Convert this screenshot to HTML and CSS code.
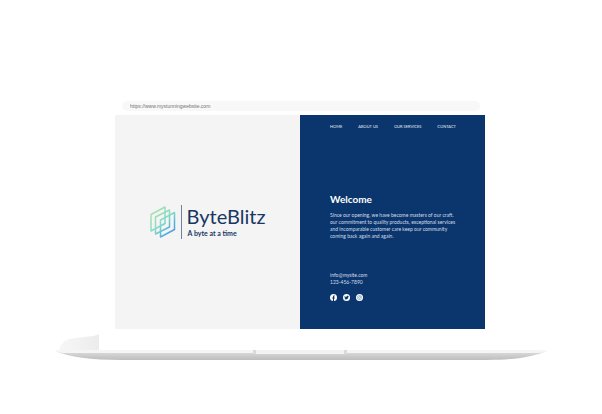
FILE: index.html
```html
<!DOCTYPE html>
<html lang="en">
<head>
<meta charset="utf-8">
<meta name="viewport" content="width=device-width, initial-scale=1">
<title>ByteBlitz</title>
<link rel="stylesheet" href="styles.css">
</head>
<body>
<main class="laptop">
  <div class="lid">
    <div class="browser">
      <div class="address-bar"><input class="address" type="text" aria-label="Address" value="https://www.mystunningwebsite.com" readonly></div>
      <div class="site">
        <section class="brand-panel">
          <svg class="mark" viewBox="0 0 26 32" aria-hidden="true">
            <defs>
              <linearGradient id="mint" gradientUnits="userSpaceOnUse" x1="1" y1="4" x2="25" y2="27">
                <stop offset="0" stop-color="#b1e2aa"/>
                <stop offset=".5" stop-color="#86dcc4"/>
                <stop offset=".75" stop-color="#58b6dd"/>
                <stop offset="1" stop-color="#4b92e5"/>
              </linearGradient>
            </defs>
            <g fill="none" stroke="url(#mint)" stroke-width="1.5" stroke-linejoin="round">
              <path d="M1 8.500 15 1V17.500L1 25Z"/>
              <path d="M5.500 11 19.500 4V21L5.500 28Z"/>
              <path d="M10.500 14 24.500 6.500V23.500L10.500 31Z"/>
            </g>
          </svg>
          <div class="wordmark">
            <h1 class="name">ByteBlitz</h1>
            <p class="tagline">A byte at a time</p>
          </div>
        </section>
        <section class="info-panel">
          <nav class="nav">
            <a href="#home">HOME</a>
            <a href="#about">ABOUT US</a>
            <a href="#services">OUR SERVICES</a>
            <a href="#contact">CONTACT</a>
          </nav>
          <div class="welcome">
            <h2 class="title">Welcome</h2>
            <p class="copy">Since our opening, we have become masters of our craft.<br>our commitment to quality products, exceptional services<br>and incomparable customer care keep our community<br>coming back again and again.</p>
          </div>
          <address class="contact">
            <a href="mailto:info@mysite.com">info@mysite.com</a>
            <a href="tel:1234567890">123-456-7890</a>
          </address>
          <div class="social">
            <a href="#facebook" aria-label="Facebook"><svg viewBox="0 0 14 14"><circle cx="7" cy="7" r="7" fill="#fff"/><path d="M6 13.800V8.800H4.300V6.900H6V5.400C6 3.700 7 2.800 8.500 2.800L9.900 2.900V4.500H9C8.200 4.500 8 5 8 5.500V6.900H9.800L9.500 8.800H8V13.800Z" fill="#0a366d"/></svg></a>
            <a href="#twitter" aria-label="Twitter"><svg viewBox="0 0 14 14"><circle cx="7" cy="7" r="7" fill="#fff"/><path d="M3 4C4.200 5.300 5.500 5.900 7 5.900 6.800 4.400 7.800 3.600 8.800 3.600 9.400 3.600 9.800 3.800 10.100 4.200L11.500 3.800 10.900 4.900 11.700 4.800 10.800 5.700C10.800 8.800 8.600 10.900 5.900 10.900 4.700 10.900 3.600 10.600 2.700 10 3.800 10 4.600 9.800 5.300 9.200 4.400 9.100 3.800 8.600 3.500 7.900H4.300C3.400 7.500 2.900 6.900 2.900 6L3.600 6.200C2.800 5.600 2.600 4.800 3 4Z" fill="#0a366d"/></svg></a>
            <a href="#instagram" aria-label="Instagram"><svg viewBox="0 0 14 14"><circle cx="7" cy="7" r="7" fill="#fff"/><g fill="none" stroke="#0a366d" stroke-width=".6"><rect x="3.200" y="3.200" width="7.600" height="7.600" rx="2.200"/><circle cx="7" cy="7" r="1.900"/></g><circle cx="9.200" cy="4.800" r=".5" fill="#0a366d"/></svg></a>
          </div>
        </section>
      </div>
    </div>
  </div>
  <svg class="base" viewBox="0 0 492 28" preserveAspectRatio="none" aria-hidden="true">
    <defs>
      <linearGradient id="shade" x1="0" y1="0" x2="1" y2="0">
        <stop offset="0" stop-color="#f7f7f7"/><stop offset="1" stop-color="#ececec"/>
      </linearGradient>
      <linearGradient id="under" x1="0" y1="0" x2="0" y2="1">
        <stop offset="0" stop-color="#dedede"/><stop offset="1" stop-color="#bdbdbd"/>
      </linearGradient>
    </defs>
    <path d="M4 17C6 8 10 5 20 4L38 2Q43 1 44 0V17Z" fill="url(#shade)"/>
    <path d="M0 17H492C480 22 462 26 432 26H66C36 26 14 23 0 17Z" fill="url(#under)"/>
    <path d="M0 17Q2 16 6 16H486Q490 16 492 17Q488 19 480 19H12Q4 19 0 17Z" fill="#f5f5f5"/>
    <path d="M198 16H292V18Q292 20 289 20H201Q198 20 198 18Z" fill="#f3f3f3"/>
    <path d="M198 16H201V20Q198 20 198 18ZM289 16H292V18Q292 20 289 20Z" fill="#dadada"/>
  </svg>
</main>
</body>
</html>
```

FILE: styles.css
```css
* { box-sizing: border-box; }
body {
  margin: 0;
  background: #fff;
  color: #fff;
  font-family: Lato, "Open Sans", sans-serif;
}
h1, h2, p { margin: 0; }
a { color: inherit; text-decoration: none; }

.laptop { padding: 82px 55px 48px; }
.lid {
  position: relative;
  z-index: 1;
  margin: 0 44px;
  padding: 16px 18px 21px 16px;
  border-radius: 12px 12px 0 0;
  background: #fff;
}
.address-bar { padding: 3px 5px 4px 7px; }
.address {
  display: block;
  width: 100%;
  height: 10px;
  padding: 0 8px;
  border: 0;
  border-radius: 5px;
  background: #f8f8f8;
  color: #727272;
  font: 5px/10px "Liberation Sans", sans-serif;
}
.site {
  display: grid;
  grid-template-columns: 1fr 1fr;
  min-height: 214px;
}

.brand-panel {
  display: flex;
  align-items: center;
  justify-content: center;
  gap: 5px;
  background: #f4f4f4;
  color: #183763;
}
.mark { width: 26px; height: 32px; }
.wordmark {
  padding-left: 5px;
  border-left: 1px solid #7480a0;
}
.name { font-size: 20px; line-height: 22px; font-weight: 400; }
.tagline { padding-left: 1px; font-size: 7px; line-height: 12px; font-weight: 700; }

.info-panel {
  padding: 8px 29px 28px 30px;
  background: #0a366d;
  font-size: 5px;
  line-height: 7px;
  white-space: nowrap;
}
.nav {
  display: flex;
  justify-content: space-between;
  font-size: 4px;
  line-height: 8px;
  color: #e4eaf4;
}
.welcome { margin-top: 61px; }
.title { font-size: 10px; line-height: 14px; font-weight: 700; }
.copy { margin-top: 6px; color: #d3dceb; }
.contact {
  display: flex;
  flex-direction: column;
  margin-top: 32px;
  color: #d3dceb;
  font-style: normal;
}
.social { display: flex; gap: 6px; margin-top: 8px; }
.social svg { display: block; width: 7px; height: 7px; }

.base { display: block; width: 100%; height: 28px; margin-top: -16px; }
```
